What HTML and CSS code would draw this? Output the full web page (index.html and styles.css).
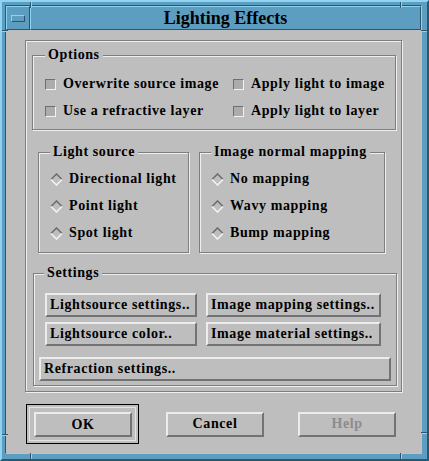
FILE: index.html
```html
<!DOCTYPE html>
<html lang="en">
<head>
    <meta charset="UTF-8">
    <title>Lighting Effects</title>
    <link rel="stylesheet" href="styles.css">
</head>
<body>
    <div class="window">
        <!-- resize handle notches of the window frame -->
        <span class="notch v" style="left: 28px; top: 0;"></span>
        <span class="notch v" style="left: 398px; top: 0;"></span>
        <span class="notch v" style="left: 28px; bottom: 0;"></span>
        <span class="notch v" style="left: 398px; bottom: 0;"></span>
        <span class="notch h" style="top: 28px; left: 0;"></span>
        <span class="notch h" style="top: 28px; right: 0;"></span>
        <span class="notch h" style="top: 432px; left: 0;"></span>
        <span class="notch h" style="top: 430px; right: 0;"></span>

        <div class="frame-inner">
            <div class="titlebar">
                <div class="menu-btn"><span class="menu-icon"></span></div>
                <div class="title">Lighting Effects</div>
            </div>

            <div class="client">
                <div class="panel">
                    <fieldset class="group options">
                        <legend>Options</legend>
                        <div class="check-grid">
                            <label class="check"><span class="box"></span>Overwrite source image</label>
                            <label class="check"><span class="box"></span>Apply light to image</label>
                            <label class="check"><span class="box"></span>Use a refractive layer</label>
                            <label class="check"><span class="box"></span>Apply light to layer</label>
                        </div>
                    </fieldset>

                    <div class="group-row">
                        <fieldset class="group light">
                            <legend>Light source</legend>
                            <label class="radio"><svg class="diamond" width="13" height="13" viewBox="0 0 13 13"><polygon points="6.5,1 12,6.5 6.5,12 1,6.5" fill="#bebebe"/><polyline points="1,6.5 6.5,1 12,6.5" fill="none" stroke="#6f6f6f" stroke-width="1.6"/><polyline points="1,6.5 6.5,12 12,6.5" fill="none" stroke="#f2f2f2" stroke-width="1.6"/></svg>Directional light</label>
                            <label class="radio"><svg class="diamond" width="13" height="13" viewBox="0 0 13 13"><polygon points="6.5,1 12,6.5 6.5,12 1,6.5" fill="#bebebe"/><polyline points="1,6.5 6.5,1 12,6.5" fill="none" stroke="#6f6f6f" stroke-width="1.6"/><polyline points="1,6.5 6.5,12 12,6.5" fill="none" stroke="#f2f2f2" stroke-width="1.6"/></svg>Point light</label>
                            <label class="radio"><svg class="diamond" width="13" height="13" viewBox="0 0 13 13"><polygon points="6.5,1 12,6.5 6.5,12 1,6.5" fill="#bebebe"/><polyline points="1,6.5 6.5,1 12,6.5" fill="none" stroke="#6f6f6f" stroke-width="1.6"/><polyline points="1,6.5 6.5,12 12,6.5" fill="none" stroke="#f2f2f2" stroke-width="1.6"/></svg>Spot light</label>
                        </fieldset>
                        <fieldset class="group mapping">
                            <legend>Image normal mapping</legend>
                            <label class="radio"><svg class="diamond" width="13" height="13" viewBox="0 0 13 13"><polygon points="6.5,1 12,6.5 6.5,12 1,6.5" fill="#bebebe"/><polyline points="1,6.5 6.5,1 12,6.5" fill="none" stroke="#6f6f6f" stroke-width="1.6"/><polyline points="1,6.5 6.5,12 12,6.5" fill="none" stroke="#f2f2f2" stroke-width="1.6"/></svg>No mapping</label>
                            <label class="radio"><svg class="diamond" width="13" height="13" viewBox="0 0 13 13"><polygon points="6.5,1 12,6.5 6.5,12 1,6.5" fill="#bebebe"/><polyline points="1,6.5 6.5,1 12,6.5" fill="none" stroke="#6f6f6f" stroke-width="1.6"/><polyline points="1,6.5 6.5,12 12,6.5" fill="none" stroke="#f2f2f2" stroke-width="1.6"/></svg>Wavy mapping</label>
                            <label class="radio"><svg class="diamond" width="13" height="13" viewBox="0 0 13 13"><polygon points="6.5,1 12,6.5 6.5,12 1,6.5" fill="#bebebe"/><polyline points="1,6.5 6.5,1 12,6.5" fill="none" stroke="#6f6f6f" stroke-width="1.6"/><polyline points="1,6.5 6.5,12 12,6.5" fill="none" stroke="#f2f2f2" stroke-width="1.6"/></svg>Bump mapping</label>
                        </fieldset>
                    </div>

                    <fieldset class="group settings">
                        <legend>Settings</legend>
                        <div class="btn-grid">
                            <button class="btn left small">Lightsource settings..</button>
                            <button class="btn left large">Image mapping settings..</button>
                            <button class="btn left small">Lightsource color..</button>
                            <button class="btn left large">Image material settings..</button>
                        </div>
                        <button class="btn left wide">Refraction settings..</button>
                    </fieldset>
                </div>

                <div class="actions">
                    <div class="default-frame">
                        <div class="default-inner">
                            <button class="btn action">OK</button>
                        </div>
                    </div>
                    <button class="btn action cancel">Cancel</button>
                    <button class="btn action help" disabled>Help</button>
                </div>
            </div>
        </div>
    </div>
</body>
</html>
```

FILE: styles.css
```css
html, body {
    margin: 0;
    width: 429px;
    height: 461px;
    overflow: hidden;
}
body {
    font-family: "Liberation Serif", "Times New Roman", serif;
    font-weight: bold;
    font-size: 14px;
    letter-spacing: 0.6px;
    color: #000;
    background: #5d9dbf;
}
.window {
    position: relative;
    box-sizing: border-box;
    height: 461px;
    border: 2px solid;
    border-color: #8fd3f3 #2b566c #2b566c #8fd3f3;
    background: #5d9dbf;
    padding: 3px 5px 5px 3px;
    display: flex;
}
.notch {
    position: absolute;
}
.notch.v {
    width: 1px;
    height: 6px;
    background: #2b566c;
    border-right: 1px solid #8fd3f3;
}
.notch.h {
    width: 6px;
    height: 1px;
    background: #2b566c;
    border-bottom: 1px solid #8fd3f3;
}
.frame-inner {
    flex: 1;
    display: flex;
    flex-direction: column;
    border: 1px solid;
    border-color: #2b566c #8fd3f3 #8fd3f3 #2b566c;
}
.titlebar {
    display: flex;
    height: 24px;
}
.menu-btn {
    box-sizing: border-box;
    width: 24px;
    border: 1px solid;
    border-color: #8fd3f3 #2b566c #2b566c #8fd3f3;
    display: flex;
    align-items: center;
    justify-content: center;
}
.menu-icon {
    box-sizing: border-box;
    width: 14px;
    height: 7px;
    border: 1px solid;
    border-color: #8fd3f3 #2b566c #2b566c #8fd3f3;
}
.title {
    flex: 1;
    border: 1px solid;
    border-color: #8fd3f3 #2b566c #2b566c #8fd3f3;
    text-align: center;
    font-size: 18px;
    letter-spacing: 0;
    line-height: 22px;
}
.client {
    flex: 1;
    background: #bebebe;
    padding: 10px 19px 0 19px;
}

/* etched frames */
.panel, .group {
    border: 1px solid #7e7e7e;
    box-shadow: inset 1px 1px #efefef, 1px 1px #efefef;
}
.panel {
    height: 352px;
    box-sizing: border-box;
}
.group {
    margin: 0;
    padding: 0;
    min-width: 0;
}
.group legend {
    background: #bebebe;
    padding: 0 3px;
    line-height: 14px;
}
.options {
    margin: 7px 5px 0 6px;
    padding: 13px 0 9px 12px;
}
.check-grid {
    display: grid;
    grid-template-columns: 188px auto;
    row-gap: 9px;
}
.check {
    display: flex;
    align-items: center;
    gap: 7px;
    height: 18px;
}
.box {
    box-sizing: border-box;
    width: 11px;
    height: 11px;
    border: 1px solid;
    border-color: #6f6f6f #f2f2f2 #f2f2f2 #6f6f6f;
    background: #acacac;
}
.group-row {
    display: flex;
    gap: 10px;
    margin: 15px 0 0 12px;
}
.light, .mapping {
    padding: 11px 0 10px 11px;
    display: flex;
    flex-direction: column;
    gap: 9px;
}
.light {
    width: 151px;
    box-sizing: border-box;
}
.mapping {
    width: 186px;
    box-sizing: border-box;
}
.radio {
    display: flex;
    align-items: center;
    gap: 6px;
    height: 18px;
}
.settings {
    margin: 13px 4px 0 7px;
    padding: 0 0 4px 0;
}
.settings legend {
    margin-left: 10px;
}
.btn-grid {
    display: grid;
    grid-template-columns: 152px 175px;
    column-gap: 9px;
    row-gap: 5px;
    margin: 13px 0 0 11px;
}
.btn {
    box-sizing: border-box;
    height: 24px;
    border: 2px solid;
    border-color: #ececec #737373 #737373 #ececec;
    background: #bebebe;
    font-family: inherit;
    font-weight: bold;
    font-size: 14px;
    letter-spacing: 0.6px;
    white-space: nowrap;
    overflow: hidden;
    color: #000;
    padding: 0 3px;
    margin: 0;
}
.btn.left {
    text-align: left;
}
.btn.wide {
    display: block;
    width: 352px;
    margin: 11px 0 0 5px;
}
.actions {
    display: flex;
    align-items: center;
    margin: 12px 0 0 1px;
}
.default-frame {
    border: 1px solid #000;
    padding: 2px;
}
.default-inner {
    border: 1px solid #e4e4e4;
    padding: 4px 3px 3px 4px;
}
.btn.action {
    width: 98px;
    height: 25px;
    text-align: center;
}
.cancel {
    margin-left: 27px;
}
.help {
    margin-left: 34px;
}
.help:disabled {
    color: #8c8c8c;
}
```
